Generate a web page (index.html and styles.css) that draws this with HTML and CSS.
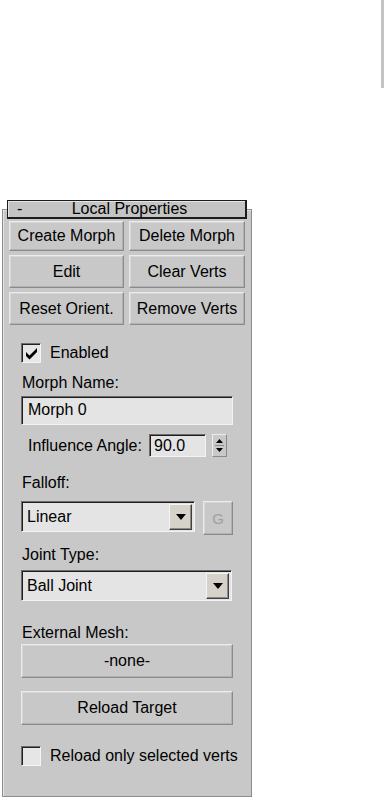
FILE: index.html
```html
<!DOCTYPE html>
<html lang="en">
<head>
    <meta charset="UTF-8">
    <meta name="viewport" content="width=device-width, initial-scale=1.0">
    <title>Local Properties</title>
    <link rel="stylesheet" href="styles.css">
</head>
<body>

    <div class="scrollbar"></div>

    <!-- Rollout -->
    <div class="rollout">
        <div class="rollout-title">
            <span class="toggle">-</span>
            <span class="title-text">Local Properties</span>
        </div>

        <div class="btn-grid">
            <button class="btn">Create Morph</button>
            <button class="btn">Delete Morph</button>
            <button class="btn">Edit</button>
            <button class="btn">Clear Verts</button>
            <button class="btn">Reset Orient.</button>
            <button class="btn">Remove Verts</button>
        </div>

        <div class="props">
            <label class="check-row enabled-row">
                <span class="checkbox">
                    <svg width="13" height="13" viewBox="0 0 13 13"><path d="M1 5 L4.5 8.5 L12 1 L12 5 L4.5 12.5 L1 9 Z" fill="#000"/></svg>
                </span>
                Enabled
            </label>

            <div class="label morph-label">Morph Name:</div>
            <div class="field name-field">Morph 0</div>

            <div class="angle-row">
                <span class="angle-label">Influence Angle:</span>
                <span class="field angle-field">90.0</span>
                <span class="spinner">
                    <svg width="9" height="19" viewBox="0 0 9 19"><path d="M4.5 3 L8 7 L1 7 Z M1 12 L8 12 L4.5 16 Z" fill="#000"/><path d="M0 9.5 H9" stroke="#8a8a8a" stroke-width="1"/></svg>
                </span>
            </div>

            <div class="label falloff-label">Falloff:</div>
            <div class="falloff-row">
                <div class="field dropdown falloff-drop">
                    <span>Linear</span>
                    <span class="drop-btn"><svg width="10" height="6" viewBox="0 0 10 6"><path d="M0 0 L10 0 L5 6 Z" fill="#000"/></svg></span>
                </div>
                <button class="btn g-btn">G</button>
            </div>

            <div class="label joint-label">Joint Type:</div>
            <div class="field dropdown joint-drop">
                <span>Ball Joint</span>
                <span class="drop-btn"><svg width="10" height="6" viewBox="0 0 10 6"><path d="M0 0 L10 0 L5 6 Z" fill="#000"/></svg></span>
            </div>

            <div class="label mesh-label">External Mesh:</div>
            <button class="btn wide-btn none-btn">-none-</button>
            <button class="btn wide-btn reload-btn">Reload Target</button>

            <label class="check-row reload-row">
                <span class="checkbox"></span>
                Reload only selected verts
            </label>
        </div>
    </div>

</body>
</html>
```

FILE: styles.css
```css
* {
    margin: 0;
    padding: 0;
    box-sizing: border-box;
    font-family: "Liberation Sans", Arial, sans-serif;
}

body {
    background: #fff;
    color: #000;
    font-size: 16px;
}

.scrollbar {
    width: 3px;
    height: 88px;
    margin-left: 381px;
    background: #c3c3c3;
}

/* Rollout frame */
.rollout {
    margin: 121px 0 0 2px;
    width: 250px;
    background: #c8c8c8;
    border: 1px solid #8c8c8c;
    box-shadow: inset 1px 1px 0 #e4e4e4;
    padding: 0 6px 30px 6px;
}

.rollout-title {
    margin: -10px -2px 0 -2px;
    height: 19px;
    background: #c4c4c4;
    border: 1px solid #1c1c1c;
    border-width: 1px 2px 2px 1px;
    box-shadow: inset 1px 1px 0 #e6e6e6;
    display: flex;
    align-items: center;
    line-height: 16px;
}

.toggle {
    padding-left: 9px;
    width: 60px;
}

.title-text {
    flex: 1;
    text-align: center;
    margin-right: 54px;
}

.btn {
    background: #c8c8c8;
    border: 1px solid;
    border-color: #ececec #8a8a8a #8a8a8a #ececec;
    box-shadow: inset -1px -1px 0 #b2b2b2, inset 1px 1px 0 #d6d6d6;
    font-size: 16px;
    color: #000;
}

.btn-grid {
    margin-top: 2px;
    display: grid;
    grid-template-columns: 115px 116px;
    grid-template-rows: 30px 33px 33px;
    column-gap: 5px;
    row-gap: 4px;
}

.props {
    padding-left: 12px;
    width: 236px;
}

.check-row {
    display: flex;
    align-items: center;
    gap: 9px;
    height: 20px;
    white-space: nowrap;
}

.checkbox {
    width: 20px;
    height: 20px;
    flex: none;
    background: #e6e6e6;
    border: 1px solid;
    border-color: #6c6c6c #f4f4f4 #f4f4f4 #6c6c6c;
    box-shadow: inset 1px 1px 0 #202020;
    display: flex;
    align-items: center;
    justify-content: center;
}

.enabled-row {
    margin-top: 18px;
}

.label {
    height: 18px;
    line-height: 18px;
    padding-left: 1px;
}

.morph-label {
    margin-top: 11px;
}

.field {
    background: #e4e4e4;
    border: 1px solid;
    border-color: #6c6c6c #f2f2f2 #f2f2f2 #6c6c6c;
    box-shadow: inset 1px 1px 0 #1e1e1e;
}

.name-field {
    margin-top: 4px;
    width: 212px;
    height: 29px;
    line-height: 26px;
    padding-left: 6px;
}

.angle-row {
    margin-top: 9px;
    height: 23px;
    display: flex;
    align-items: center;
    padding-left: 7px;
}

.angle-label {
    width: 121px;
}

.angle-field {
    width: 57px;
    height: 23px;
    line-height: 21px;
    padding-left: 4px;
}

.spinner {
    margin-left: 6px;
    width: 15px;
    height: 23px;
    background: #c8c8c8;
    border: 1px solid;
    border-color: #ececec #8a8a8a #8a8a8a #ececec;
    display: flex;
    align-items: center;
    justify-content: center;
}

.falloff-label {
    margin-top: 17px;
}

.falloff-row {
    margin-top: 9px;
    display: flex;
    gap: 8px;
    height: 34px;
}

.dropdown {
    height: 31px;
    display: flex;
    align-items: center;
    justify-content: space-between;
    padding: 0 2px 0 5px;
}

.falloff-drop {
    width: 174px;
}

.joint-drop {
    width: 211px;
    margin-top: 6px;
}

.drop-btn {
    width: 23px;
    height: 26px;
    background: #d6d2ca;
    border: 1px solid;
    border-color: #f4f4f4 #404040 #404040 #f4f4f4;
    box-shadow: inset -1px -1px 0 #8a8a8a;
    display: flex;
    align-items: center;
    justify-content: center;
}

.g-btn {
    width: 30px;
    height: 34px;
    color: #a0a0a0;
    font-size: 15px;
}

.joint-label {
    margin-top: 11px;
}

.mesh-label {
    margin-top: 23px;
}

.wide-btn {
    display: block;
    width: 212px;
    height: 34px;
}

.none-btn {
    margin-top: 2px;
}

.reload-btn {
    margin-top: 13px;
}

.reload-row {
    margin-top: 21px;
}
```
